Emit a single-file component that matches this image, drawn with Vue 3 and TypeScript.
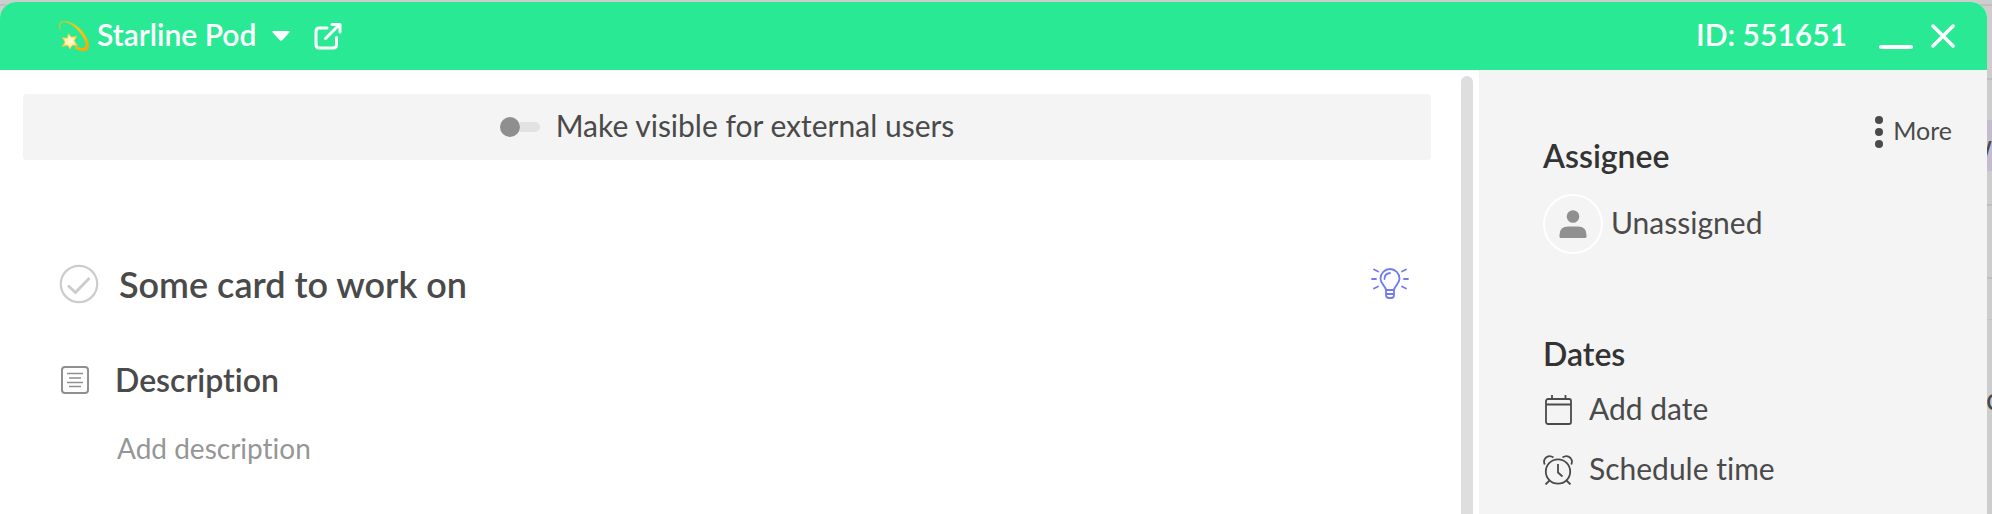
<script setup lang="ts">
import { ref } from 'vue'

interface Card {
  id: number
  pod: string
  title: string
}

const card: Card = { id: 551651, pod: 'Starline Pod', title: 'Some card to work on' }
const visibleForExternal = ref(false)
const done = ref(false)
const description = ref('')
</script>

<template>
  <div class="screen">
    <div class="board" aria-hidden="true">
      <div class="board-top"></div>
      <div class="board-row board-head"></div>
      <div class="board-tag">w</div>
      <div class="board-row board-gap"></div>
      <div class="board-row board-cell"></div>
      <div class="board-cell board-edge"></div>
      <div class="board-text">c</div>
    </div>

    <section class="dialog" role="dialog" aria-labelledby="card-title">
      <header class="bar">
        <button class="pod" type="button">
          <svg class="comet" viewBox="0 0 30 30" aria-hidden="true">
            <defs>
              <linearGradient id="trail" x1="0" y1="0" x2="1" y2="1">
                <stop offset="0" stop-color="#c9c42a" />
                <stop offset=".5" stop-color="#f2c81c" />
                <stop offset="1" stop-color="#ffa000" />
              </linearGradient>
              <radialGradient id="star">
                <stop offset="0" stop-color="#fffde8" />
                <stop offset=".6" stop-color="#fff0a0" />
                <stop offset="1" stop-color="#fbc83c" />
              </radialGradient>
            </defs>
            <path d="M2 10.600Q-.2 7.500 0 4.200C.3 1.200 2.200 0 5.200 0C13 0 23 7 28 17.500C31 24 30.500 29.500 25.500 30C22 30.300 18.500 29 15.500 27.200L17 25C20 26.600 22.500 27.400 24.500 27C27.600 26.200 27 22 25 18C20 8.500 12 2 5.500 1.300C2.500 1 1.300 2.400 1.200 4.500Q1.100 7.500 2 10.600Z" fill="url(#trail)" />
            <path d="M9.500 12.500L12.500 16.200L17.800 15L15.200 19.800L18.600 24.600L13.200 24.200L11 28L8.700 24.300L3 25.600L6 21L3 16.500L8.300 17.200Z" fill="url(#star)" stroke="#fbc83c" stroke-width=".6" stroke-linejoin="round" />
          </svg>
          <span>{{ card.pod }}</span>
          <svg class="caret" viewBox="0 0 18 10" aria-hidden="true">
            <path d="M1 0H17Q18.300 .4 17.300 1.600L10.500 9Q9 10.500 7.500 9L.7 1.600Q-.3 .4 1 0Z" fill="currentColor" />
          </svg>
        </button>
        <a class="open" href="#card" aria-label="Open card">
          <svg viewBox="0 0 28 28" fill="none" stroke="currentColor" stroke-width="3" stroke-linecap="round" stroke-linejoin="round" aria-hidden="true">
            <path d="M13 6H5.500Q2 6 2 9.500V22.500Q2 26 5.500 26H19Q22.500 26 22.500 22.500V15.500" />
            <path d="M11.500 16.500L25.500 2.500M18 2.500H26V10" />
          </svg>
        </a>
        <span class="card-id">ID: {{ card.id }}</span>
        <button class="icon-button minimize" type="button" aria-label="Minimize">
          <svg viewBox="0 0 34 26" aria-hidden="true">
            <path d="M2 24H32" stroke="currentColor" stroke-width="4" stroke-linecap="round" />
          </svg>
        </button>
        <button class="icon-button close" type="button" aria-label="Close">
          <svg viewBox="0 0 24 24" aria-hidden="true">
            <path d="M2 2L22 22M22 2L2 22" stroke="currentColor" stroke-width="3.500" stroke-linecap="round" />
          </svg>
        </button>
      </header>

      <div class="body">
        <main class="content">
          <label class="visibility">
            <input v-model="visibleForExternal" class="toggle" type="checkbox" role="switch" />
            <span>Make visible for external users</span>
          </label>

          <div class="title-row">
            <button class="check" type="button" aria-label="Mark as done" :aria-pressed="done" @click="done = !done">
              <svg viewBox="0 0 40 40" fill="none" stroke="currentColor" aria-hidden="true">
                <circle cx="20" cy="20" r="18.200" stroke-width="2.200" />
                <path d="M9 21.500L16.500 28.500L30.500 14" stroke-width="2.800" />
              </svg>
            </button>
            <h1 id="card-title">{{ card.title }}</h1>
            <button class="hint" type="button" aria-label="Suggestions">
              <svg viewBox="0 0 38 32" fill="none" stroke="currentColor" stroke-width="1.800" stroke-linecap="round" stroke-linejoin="round" aria-hidden="true">
                <path d="M15 22C14.500 18 9.500 16 9.500 10.500A9.500 9.500 0 0 1 28.500 10.500C28.500 16 23.500 18 23 22ZM15 22V27Q15 30 18 30H20Q23 30 23 27V22M15 26H23" />
                <path d="M13.500 11Q13.500 5.500 19 5" />
                <path d="M3 1.500L7 3.500M1 11H5M3 20.500L7 18.500M35 1.500L31 3.500M37 11H33M35 20.500L31 18.500" />
              </svg>
            </button>
          </div>

          <div class="description-head">
            <svg viewBox="0 0 28 28" fill="none" stroke="currentColor" aria-hidden="true">
              <rect x="1" y="1" width="26" height="26" rx="3" stroke-width="2" />
              <path d="M6 7.500H22M8 12H20M6 16.500H22M8 20.500H20" stroke-width="1.600" />
            </svg>
            <h2 id="description-label">Description</h2>
          </div>
          <textarea v-model="description" class="description" rows="1" placeholder="Add description" aria-labelledby="description-label"></textarea>
        </main>

        <div class="scroll-track" aria-hidden="true"><div class="scroll-thumb"></div></div>

        <aside class="side">
          <button class="more" type="button">
            <svg viewBox="0 0 8 32" fill="currentColor" aria-hidden="true">
              <circle cx="4" cy="4" r="4" />
              <circle cx="4" cy="16" r="4" />
              <circle cx="4" cy="28" r="4" />
            </svg>
            <span>More</span>
          </button>
          <section class="assignee">
            <h2>Assignee</h2>
            <button class="person" type="button">
              <span class="avatar">
                <svg viewBox="0 0 28 28" fill="currentColor" aria-hidden="true">
                  <circle cx="14" cy="6.500" r="6.300" />
                  <path d="M2 28Q.5 28 .5 26.500V25Q.5 16.500 9 16.500H19Q27.500 16.500 27.500 25V26.500Q27.500 28 26 28Z" />
                </svg>
              </span>
              <span>Unassigned</span>
            </button>
          </section>
          <section class="dates">
            <h2>Dates</h2>
            <button class="action" type="button">
              <svg viewBox="0 0 30 30" fill="none" stroke="currentColor" stroke-width="1.800" aria-hidden="true">
                <rect x="3" y="4" width="25" height="25" rx="2" />
                <path d="M3 9.500H28M9 0V4M22.500 0V4" />
              </svg>
              <span>Add date</span>
            </button>
            <button class="action" type="button">
              <svg viewBox="0 0 30 30" fill="none" stroke="currentColor" stroke-width="1.800" aria-hidden="true">
                <circle cx="15" cy="16.500" r="12.200" />
                <path d="M15 9V17.500L19.500 21.500M6.500 25.500L2.500 29.500M23.500 25.500L27.500 29.500" />
                <path d="M1.800 9.500Q0 6 2.500 3Q6 -.5 10.500 2.500M28.200 9.500Q30 6 27.500 3Q24 -.5 19.500 2.500" />
              </svg>
              <span>Schedule time</span>
            </button>
          </section>
        </aside>
      </div>
    </section>
  </div>
</template>

<style>
body {
  margin: 0;
  overflow: hidden;
}
</style>

<style scoped>
* {
  box-sizing: border-box;
}

.screen {
  position: relative;
  display: flex;
  min-height: 100vh;
  padding: 2px 5px 0 0;
  overflow: hidden;
  background: #cdcdcd;
  color: #4a4a4a;
  font-family: Lato, "Liberation Sans", sans-serif;
  font-size: 30px;
  font-variant-ligatures: none;
  line-height: 36px;
}

button {
  display: flex;
  align-items: center;
  padding: 0;
  border: 0;
  background: none;
  color: inherit;
  font: inherit;
  font-variant-ligatures: none;
  cursor: pointer;
}

button > span:last-of-type,
.visibility > span,
.card-id {
  padding-bottom: 4px;
}

svg {
  display: block;
  flex: none;
}

h1,
h2 {
  margin: 0;
  font-weight: 600;
}

h2 {
  font-size: 32px;
}

/* The board that shows behind the dialog's edges */
.board {
  position: absolute;
  inset: 0;
}

.board-top {
  height: 6px;
  border-bottom: 2px solid #c0c0c0;
}

.board-row {
  border-bottom: 2px solid #bdbdbd;
}

.board-head {
  height: 74px;
}

.board-tag {
  height: 51px;
  margin-top: 40px;
  background: #c3bccf;
  line-height: 51px;
  text-align: right;
}

.board-gap {
  height: 35px;
}

.board-cell {
  height: 73px;
}

.board-edge {
  height: 41px;
  border-bottom: 1px solid #c3c3c3;
}

.board-text {
  margin-top: 60px;
  padding-left: calc(100% - 6px);
}

.dialog {
  position: relative;
  display: flex;
  flex: 1;
  flex-direction: column;
  overflow: hidden;
  border-radius: 16px 16px 0 0;
  background: #fff;
}

.bar {
  display: flex;
  align-items: center;
  height: 68px;
  padding: 0 32px 0 59px;
  background: #2ae995;
  color: #fff;
  font-weight: 600;
}

.comet {
  width: 30px;
  height: 30px;
  margin-right: 8px;
}

.caret {
  width: 18px;
  height: 10px;
  margin-left: 16px;
}

.open {
  margin-left: 24px;
  color: inherit;
}

.open svg {
  width: 28px;
  height: 28px;
}

.card-id {
  margin-left: auto;
}

.minimize {
  margin-left: 32px;
}

.minimize svg {
  width: 34px;
  height: 26px;
}

.close {
  margin-left: 18px;
}

.close svg {
  width: 24px;
  height: 24px;
}

.body {
  display: grid;
  flex: 1;
  grid-template-columns: minmax(0, 1fr) 18px 508px;
}

.content {
  padding: 24px 30px 24px 23px;
}

.visibility {
  display: flex;
  align-items: center;
  justify-content: center;
  gap: 16px;
  height: 66px;
  border-radius: 4px;
  background: #f4f4f4;
  cursor: pointer;
}

.toggle {
  display: flex;
  align-items: center;
  width: 40px;
  height: 20px;
  margin: 0;
  appearance: none;
}

.toggle::before {
  width: 20px;
  height: 20px;
  border-radius: 50%;
  background: #8f8f8f;
  content: "";
}

.toggle::after {
  width: 20px;
  height: 10px;
  border-radius: 0 5px 5px 0;
  background: #e2e2e2;
  content: "";
}

.toggle:checked {
  flex-direction: row-reverse;
}

.toggle:checked::after {
  border-radius: 5px 0 0 5px;
}

.title-row {
  display: flex;
  align-items: center;
  margin-top: 104px;
  padding: 0 22px 0 36px;
}

.title-row h1 {
  margin-left: 20px;
  font-size: 36px;
  line-height: 40px;
}

.check {
  color: #ccc;
}

.check svg {
  width: 40px;
  height: 40px;
}

.hint {
  margin-left: auto;
  color: #727cf0;
}

.hint svg {
  width: 38px;
  height: 32px;
}

.description-head {
  display: flex;
  align-items: center;
  gap: 26px;
  margin-top: 58px;
  padding-left: 38px;
}

.description-head svg {
  width: 28px;
  height: 28px;
  color: #909090;
}

.description {
  display: block;
  width: 100%;
  margin-top: 32px;
  padding: 0 0 0 94px;
  border: 0;
  outline: 0;
  background: none;
  color: inherit;
  font: inherit;
  font-size: 28px;
  font-variant-ligatures: none;
  line-height: 36px;
  resize: none;
}

.description::placeholder {
  color: #969696;
  opacity: 1;
}

.scroll-track {
  display: flex;
  padding-top: 6px;
}

.scroll-thumb {
  width: 12px;
  border-radius: 6px 6px 0 0;
  background: #dedede;
}

.side {
  display: flex;
  flex-direction: column;
  padding: 42px 35px 0 64px;
  background: #f4f4f4;
}

.side h2 {
  color: #333;
}

.more {
  align-self: flex-end;
  gap: 10px;
  font-size: 25px;
}

.more svg {
  width: 8px;
  height: 32px;
}

.assignee {
  margin-top: -14px;
}

.person {
  gap: 8px;
  margin-top: 20px;
}

.avatar {
  display: grid;
  place-items: center;
  width: 60px;
  height: 60px;
  border: 2px solid #fff;
  border-radius: 50%;
  color: #909090;
}

.avatar svg {
  width: 28px;
  height: 28px;
}

.dates {
  margin-top: 82px;
}

.action {
  gap: 16px;
  margin-top: 18px;
}

.action + .action {
  margin-top: 20px;
}

.action svg {
  width: 30px;
  height: 30px;
}
</style>
